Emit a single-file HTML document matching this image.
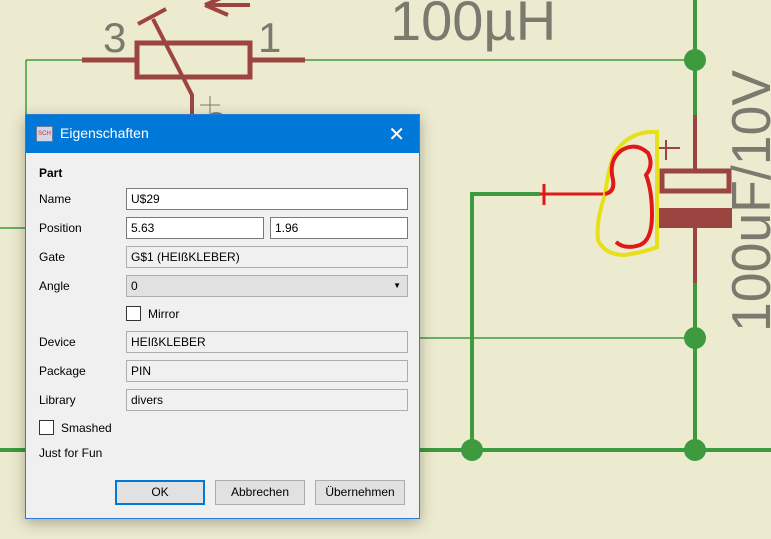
<!DOCTYPE html>
<html><head><meta charset="utf-8"><style>
body{margin:0;width:771px;height:539px;overflow:hidden;background:#edebcf;font-family:"Segoe UI","Liberation Sans",sans-serif;position:relative}
svg{position:absolute;left:0;top:0}
.dlg{position:absolute;left:25px;top:114px;width:395px;height:405px;background:#f0f0f0;border:1px solid #2b7cd3;box-sizing:border-box;box-shadow:0 4px 14px rgba(0,0,0,.3);font-size:12px;color:#000}
.tb{height:38px;background:#0078d7;color:#fff;position:relative}
.tb .t{position:absolute;left:34px;top:10px;font-size:14px}
.tb .x{position:absolute;right:14px;top:7px;font-size:20px;font-weight:100;font-family:"DejaVu Sans",sans-serif}
.ic{position:absolute;left:10px;top:11px;width:15px;height:14px;background:#cfd6e6;border:1px solid #6b7a99;font-size:6px;color:#c33;line-height:14px;text-align:center}
.l{position:absolute;left:13px}
.in{position:absolute;height:22px;box-sizing:border-box;border:1px solid #7a7a7a;background:#fff;padding-left:4px;line-height:20px}
.ro{background:#f0f0f0;border-color:#adadad}
.cb{position:absolute;width:15px;height:15px;border:1px solid #333;background:#fff;box-sizing:border-box}
.bt{position:absolute;top:365px;width:90px;height:25px;box-sizing:border-box;border:1px solid #adadad;background:#e1e1e1;text-align:center;line-height:23px}
</style></head><body>
<svg width="771" height="539">
<g stroke="#3e9a3e" fill="none">
<path d="M26 60H82M305 60H695M26 60V114" stroke-width="1.5"/>
<path d="M0 228H25M420 338H695" stroke-width="1.5"/>
<path d="M695 0V115M695 283V450M472 450V194H540M0 450H771" stroke-width="4"/>
</g>
<g fill="#3e9a3e"><circle cx="695" cy="60" r="11"/><circle cx="695" cy="338" r="11"/><circle cx="695" cy="450" r="11"/><circle cx="472" cy="450" r="11"/></g>
<g stroke="#9c4540" fill="none" stroke-width="5">
<path d="M82 60H137M250 60H305"/>
<rect x="137" y="43" width="113" height="34"/>
<path d="M138 24L166 9M153 19L192 95V115" stroke-width="4"/>
<path d="M205 5H250M205 5L228 -5M205 5L228 15" stroke-width="4"/>
<path d="M695 115V172M695 228V283" stroke-width="4"/>
<rect x="662" y="171" width="67" height="20" stroke-width="5"/>
</g>
<path d="M210 96V114M200 105H220" stroke="#7a7a6e" stroke-width="1"/>
<rect x="659" y="208" width="73" height="20" fill="#9c4540"/>
<path d="M666 140V160M656 148H680" stroke="#9c4540" stroke-width="2"/>
<path d="M540 194H605M544 184V205" stroke="#e01818" stroke-width="3"/>
<path d="M657 132H648Q625 135 614 155Q608 170 605 195Q596 220 598 240Q605 255 625 255Q645 252 657 247Z" fill="none" stroke="#e6e01c" stroke-width="4"/>
<path d="M605 194Q615 192 613 180Q608 160 622 150Q636 142 648 153Q654 165 646 175Q652 190 652 215Q652 240 640 245Q625 250 616 242" fill="none" stroke="#e01818" stroke-width="4"/>
<g fill="#7a7a6e" font-family="Liberation Sans,sans-serif">
<text x="390" y="40" font-size="56">100µH</text>
<text x="103" y="52" font-size="42">3</text>
<text x="258" y="52" font-size="42">1</text>
<text x="205" y="140" font-size="40">2</text>
<text transform="translate(770,332) rotate(-90)" font-size="55" textLength="262" lengthAdjust="spacingAndGlyphs">100uF/10V</text>
</g>
</svg>
<div class="dlg">
<div class="tb"><div class="ic">SCH</div><div class="t">Eigenschaften</div><div class="x">✕</div></div>
<div class="l" style="top:51px;font-weight:bold">Part</div>
<div class="l" style="top:77px">Name</div><div class="in" style="left:100px;top:73px;width:282px">U$29</div>
<div class="l" style="top:106px">Position</div><div class="in" style="left:100px;top:102px;width:138px">5.63</div><div class="in" style="left:244px;top:102px;width:138px">1.96</div>
<div class="l" style="top:135px">Gate</div><div class="in ro" style="left:100px;top:131px;width:282px">G$1 (HEIßKLEBER)</div>
<div class="l" style="top:164px">Angle</div><div class="in ro" style="left:100px;top:160px;width:282px;background:#e1e1e1">0<span style="position:absolute;right:6px;top:0;font-size:8px">▼</span></div>
<div class="cb" style="left:100px;top:191px"></div><div class="l" style="left:122px;top:192px">Mirror</div>
<div class="l" style="top:220px">Device</div><div class="in ro" style="left:100px;top:216px;width:282px">HEIßKLEBER</div>
<div class="l" style="top:249px">Package</div><div class="in ro" style="left:100px;top:245px;width:282px">PIN</div>
<div class="l" style="top:278px">Library</div><div class="in ro" style="left:100px;top:274px;width:282px">divers</div>
<div class="cb" style="left:13px;top:305px"></div><div class="l" style="left:35px;top:306px">Smashed</div>
<div class="l" style="top:331px">Just for Fun</div>
<div class="bt" style="left:89px;border:2px solid #0078d7;line-height:21px">OK</div>
<div class="bt" style="left:189px">Abbrechen</div>
<div class="bt" style="left:289px">Übernehmen</div>
</div>
</body></html>
